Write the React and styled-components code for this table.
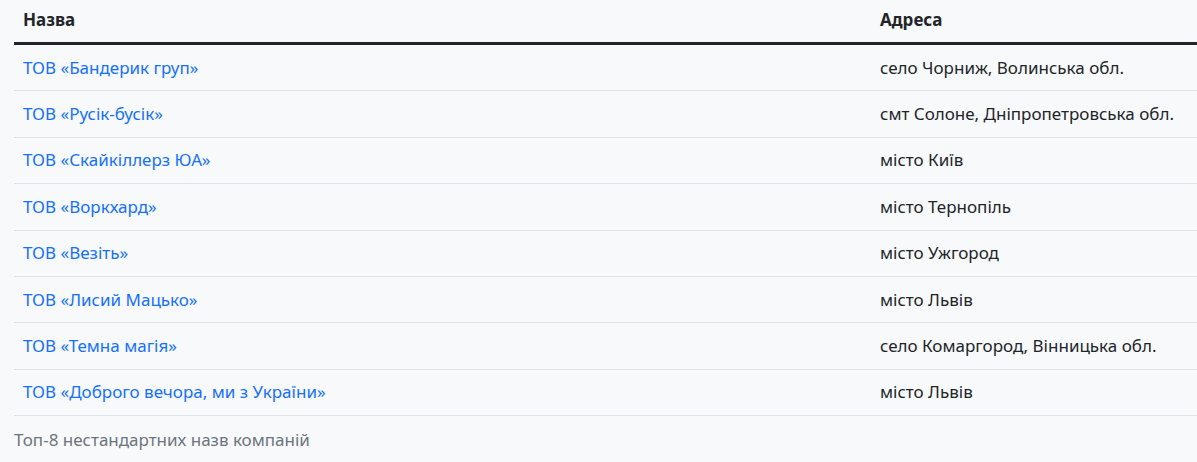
import React from 'react';
import styled, { createGlobalStyle } from 'styled-components';

const companies = [
  { name: 'ТОВ «Бандерик груп»', address: 'село Чорниж, Волинська обл.' },
  { name: 'ТОВ «Русік-бусік»', address: 'смт Солоне, Дніпропетровська обл.' },
  { name: 'ТОВ «Скайкіллерз ЮА»', address: 'місто Київ' },
  { name: 'ТОВ «Воркхард»', address: 'місто Тернопіль' },
  { name: 'ТОВ «Везіть»', address: 'місто Ужгород' },
  { name: 'ТОВ «Лисий Мацько»', address: 'місто Львів' },
  { name: 'ТОВ «Темна магія»', address: 'село Комаргород, Вінницька обл.' },
  { name: 'ТОВ «Доброго вечора, ми з України»', address: 'місто Львів' },
];

const GlobalStyle = createGlobalStyle`
  html, body {
    margin: 0;
    padding: 0;
    background: #f8f9fa;
    overflow: hidden;
  }
  body {
    font-family: "Noto Sans", "Open Sans", sans-serif;
    font-size: 17px;
    color: #212529;
  }
`;

const Page = styled.div`
  padding: 0 0 0 14px;
`;

const Table = styled.table`
  width: 1183px;
  table-layout: fixed;
  border-collapse: collapse;
  caption-side: bottom;
  line-height: 24px;
`;

const Caption = styled.caption`
  text-align: left;
  color: #6c757d;
  padding: 12px 0;
`;

const HeadCell = styled.th`
  text-align: left;
  font-weight: 700;
  padding: 8px 9px 10px;
  border-bottom: 3px solid #212529;
`;

const Cell = styled.td`
  padding: 10.7px 9px;
  border-bottom: 1px solid #dee2e6;
`;

const Link = styled.a`
  color: #1570fd;
  text-decoration: none;
`;

export default function App() {
  return (
    <Page>
      <GlobalStyle />
      <Table>
        <colgroup>
          <col style={{ width: 857 }} />
          <col />
        </colgroup>
        <Caption>Топ-8 нестандартних назв компаній</Caption>
        <thead>
          <tr>
            <HeadCell>Назва</HeadCell>
            <HeadCell>Адреса</HeadCell>
          </tr>
        </thead>
        <tbody>
          {companies.map((c) => (
            <tr key={c.name}>
              <Cell>
                <Link href="#">{c.name}</Link>
              </Cell>
              <Cell>{c.address}</Cell>
            </tr>
          ))}
        </tbody>
      </Table>
    </Page>
  );
}
